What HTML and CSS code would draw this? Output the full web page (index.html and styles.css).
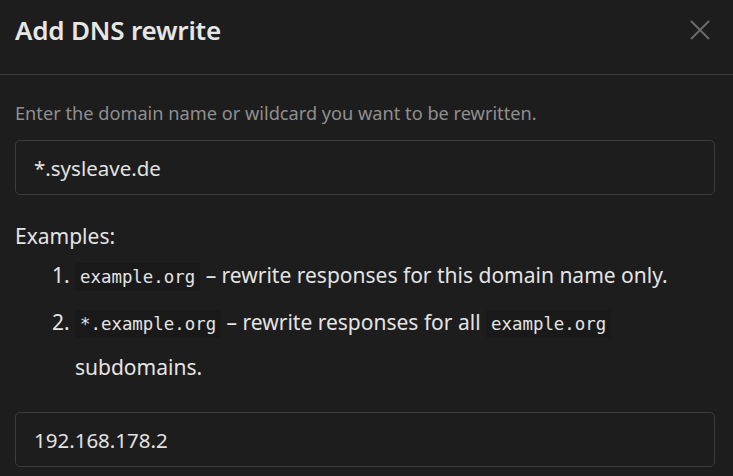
FILE: index.html
```html
<!DOCTYPE html>
<html>
<head>
<meta charset="utf-8">
<link rel="stylesheet" href="styles.css">
</head>
<body>
<div class="modal">
  <div class="modal-header">
    <h1 class="modal-title">Add DNS rewrite</h1>
    <button class="close" aria-label="Close">
      <svg width="20" height="20" viewBox="0 0 20 20"><path d="M1 1 L19 19 M19 1 L1 19" stroke="#6b6b6b" stroke-width="2" fill="none"/></svg>
    </button>
  </div>
  <div class="modal-body">
    <p class="hint">Enter the domain name or wildcard you want to be rewritten.</p>
    <div class="input">*.sysleave.de</div>
    <div class="examples">
      <div class="examples-title">Examples:</div>
      <ol class="examples-list">
        <li><code>example.org</code> – rewrite responses for this domain name only.</li>
        <li><code>*.example.org</code> – rewrite responses for all <code>example.org</code> subdomains.</li>
      </ol>
    </div>
    <div class="input">192.168.178.2</div>
  </div>
</div>
</body>
</html>
```
FILE: styles.css
```css
html, body {
  margin: 0;
  padding: 0;
  background: #1d1d1d;
  height: 100%;
  overflow: hidden;
}
body {
  font-family: "Noto Sans", "Open Sans", sans-serif;
  color: #e4e4e4;
}
.modal-header {
  box-sizing: border-box;
  height: 75px;
  border-bottom: 1px solid #3c3c3c;
  padding: 12px 23px 0 15px;
  display: flex;
  justify-content: space-between;
  align-items: flex-start;
}
.modal-title {
  margin: 0;
  font-size: 26px;
  font-weight: 600;
  line-height: 36px;
  color: #e6e6e6;
  letter-spacing: -0.2px;
}
.close {
  background: none;
  border: none;
  padding: 0;
  margin-top: 8px;
  width: 20px;
  height: 20px;
  cursor: pointer;
}
.close svg { display: block; }
.modal-body {
  padding: 25px 18px 0 15px;
}
.hint {
  margin: 0 0 14px;
  font-size: 18.2px;
  line-height: 26px;
  color: #8f8f8f;
}
.input {
  box-sizing: border-box;
  height: 55px;
  border: 1px solid #3b3b3b;
  border-radius: 5px;
  padding: 0 18px;
  display: flex;
  align-items: center;
  font-size: 20.5px;
  color: #e2e2e2;
}
.examples {
  margin: 26px 0 22px;
  font-size: 21px;
}
.examples-title {
  line-height: 30px;
}
.examples-list {
  margin: 2px 0 0;
  padding-left: 60px;
}
.examples-list li {
  line-height: 45px;
  margin-bottom: 2px;
}
code {
  font-family: "DejaVu Sans Mono", "Liberation Mono", monospace;
  font-size: 17.4px;
  line-height: 1;
  background: #191919;
  padding: 4px 5px;
  border-radius: 3px;
}
```
